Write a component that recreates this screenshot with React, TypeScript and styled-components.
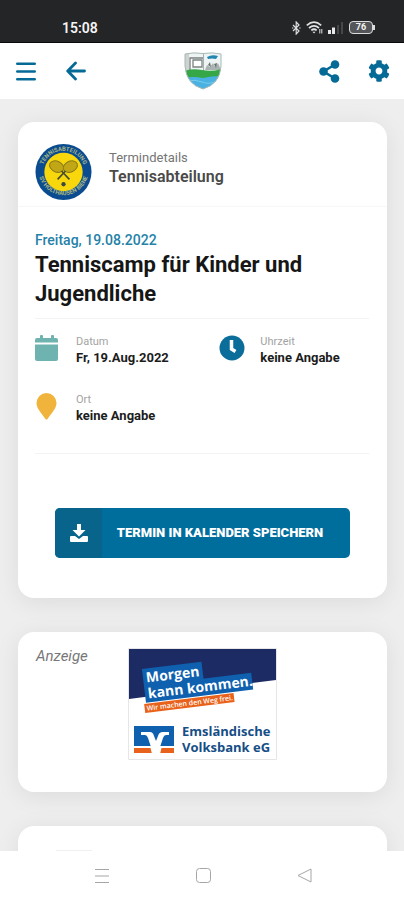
import React from "react";
import styled, { createGlobalStyle } from "styled-components";

const Global = createGlobalStyle`
  *, *::before, *::after { box-sizing: border-box; }
  body { margin: 0; background: #ececec; font-family: Roboto, "Liberation Sans", sans-serif; }
  h1, p, dl, dd, dt { margin: 0; }
  svg { display: block; flex: none; }
`;

const blue = "#066a96";

const Screen = styled.div`
  height: 100vh;
  display: flex;
  flex-direction: column;
  overflow: hidden;
`;

const StatusBar = styled.div`
  flex: none;
  display: flex;
  align-items: center;
  justify-content: space-between;
  height: 43px;
  padding: 13px 31px 0 62px;
  background: #242527;
  border-bottom: 1px solid #08090a;
  color: #f4f4f4;
`;

const Clock = styled.span`
  font-size: 14px;
  line-height: 16px;
  font-weight: 600;
`;

const StatusIcons = styled.div`
  display: flex;
  align-items: center;
  gap: 5px;
`;

const Header = styled.header`
  flex: none;
  display: grid;
  grid-template-columns: 1fr auto 1fr;
  align-items: center;
  height: 56px;
  padding: 0 11px 0 12px;
  background: #fff;
`;

const Actions = styled.div<{ $end?: boolean }>`
  display: flex;
  gap: 22px;
  justify-content: ${(p) => (p.$end ? "flex-end" : "flex-start")};
`;

const IconButton = styled.button`
  display: grid;
  place-items: center;
  width: 28px;
  height: 40px;
  padding: 0;
  border: 0;
  background: none;
  color: ${blue};
`;

const Content = styled.main`
  flex: 1;
  min-height: 0;
  overflow: hidden;
  display: flex;
  flex-direction: column;
  gap: 34px;
  padding: 23px 17px 0 18px;
  background: #eeeeee;
`;

const Card = styled.section`
  flex: none;
  border-radius: 16px;
  background: #fff;
  box-shadow: 0 4px 24px rgba(0, 0, 0, 0.08);
`;

const CardHead = styled.div`
  display: flex;
  align-items: center;
  gap: 17px;
  padding: 21px 17px 5px;
  border-bottom: 1px solid #f7f7f7;
`;

const HeadText = styled.div`
  padding-bottom: 8px;
  color: #4a4a4a;
`;

const Kicker = styled.p`
  font-size: 13px;
  line-height: 18px;
  color: #757575;
`;

const Department = styled.p`
  font-size: 16px;
  line-height: 20px;
  font-weight: 600;
`;

const CardBody = styled.div`
  padding: 25px 18px 40px 17px;
`;

const DateLine = styled.p`
  font-size: 14px;
  line-height: 16px;
  font-weight: 500;
  color: #2481a8;
`;

const Title = styled.h1`
  padding: 2px 0 10px;
  font-size: 22px;
  line-height: 29px;
  font-weight: 700;
  color: #161616;
`;

const Details = styled.dl`
  display: grid;
  grid-template-columns: 9fr 8fr;
  gap: 26px 16px;
  padding: 16px 0 28px;
  border-top: 1px solid #f3f3f3;
  border-bottom: 1px solid #f3f3f3;
`;

const Detail = styled.div`
  display: flex;
  gap: 15px;
`;

const Label = styled.dt`
  font-size: 11px;
  line-height: 14px;
  color: #a3a3a3;
`;

const Value = styled.dd`
  font-size: 13px;
  line-height: 18px;
  font-weight: 700;
  color: #1c1c1c;
  white-space: nowrap;
`;

const SaveButton = styled.button`
  display: flex;
  align-items: stretch;
  width: calc(100% - 39px);
  height: 50px;
  margin: 54px 19px 0 20px;
  padding: 0;
  border: 0;
  border-radius: 5px;
  overflow: hidden;
  background: #006e9d;
  color: #fff;
  font: 900 13px/20px Roboto, "Liberation Sans", sans-serif;
`;

const SaveIcon = styled.span`
  display: grid;
  place-items: center;
  width: 47px;
  background: #08648b;
`;

const SaveLabel = styled.span`
  flex: 1;
  align-self: center;
  padding-right: 12px;
  white-space: nowrap;
`;

const AdCard = styled(Card)`
  display: grid;
  grid-template-columns: 5fr auto 6fr;
  padding: 16px 0 32px 18px;
`;

const AdLabel = styled.span`
  font-size: 15px;
  line-height: 16px;
  font-style: italic;
  color: #777;
`;

const Peek = styled(Card)`
  height: 120px;
  padding: 24px 38px;
`;

const PeekBlock = styled.div`
  width: 36px;
  height: 20px;
  background: #f0f0f0;
`;

const NavBar = styled.nav`
  flex: none;
  display: flex;
  justify-content: center;
  gap: 73px;
  height: 49px;
  padding-left: 2px;
  background: #fff;
`;

const NavButton = styled(IconButton)`
  height: 49px;
  color: #a6a6a6;
`;

const Bluetooth = () => (
  <svg width="9" height="14" viewBox="0 0 9 14" fill="none" stroke="#ddd" strokeWidth="1.2">
    <path d="M1 4l6 6-2.800 3V1L7 4l-6 6" />
    <path d="M0 7h1.400M7.200 7h1.400" />
  </svg>
);

const Wifi = () => (
  <svg width="17" height="13" viewBox="0 0 17 13" fill="none" stroke="#e2e2e2" strokeWidth="1.7">
    <path d="M.8 4.400Q8 -2 15.200 4.400M3 7q5-4.400 10 0M5.300 9.400q2.700-2.300 5.400 0" />
    <path d="M6.400 10.700h3.200L8 12.500z" fill="#e2e2e2" stroke="none" />
    <path d="M13.800 8v4.500M15.800 8v4.500" strokeWidth="1" />
  </svg>
);

const Signal = () => (
  <svg width="16" height="13" viewBox="0 0 16 13">
    <path d="M0 9h3v4H0zM4 6.500h3V13H4z" fill="#e8e8e8" />
    <path d="M9 4h2v9H9zM13 1h2v12h-2z" fill="#464749" />
  </svg>
);

const BatteryBox = styled.span`
  position: relative;
  display: grid;
  place-items: center;
  width: 24px;
  height: 13px;
  border: 1px solid #ddd;
  border-radius: 4px;
  font-size: 9px;
  line-height: 11px;
  font-weight: 700;
  background: #55565a;

  &::after {
    content: "";
    position: absolute;
    right: -3px;
    top: 3px;
    width: 2px;
    height: 5px;
    background: #ddd;
  }
`;

const Crest = () => (
  <svg width="38" height="38" viewBox="0 0 38 38" role="img" aria-label="Wappen">
    <defs>
      <clipPath id="shield">
        <path d="M1 2Q10 0 19 1.500 28 0 37 2V14Q36 32 19 37 2 32 1 14z" />
      </clipPath>
    </defs>
    <g clipPath="url(#shield)">
      <path fill="#eef4f3" d="M0 0h38v38H0z" />
      <path fill="#cdd3d0" d="M1 1h4v19H1z" />
      <path fill="#fff" d="M7 6h11v10H7z" />
      <path fill="none" stroke="#7a8381" strokeWidth="1.300" d="M6 18V6h13M9 15V8h9v7z" />
      <path stroke="#a5afae" d="M19.500 1v18" />
      <path fill="#a9b3b2" d="M21 18l2-5 3 2 3-4 2 4 3-4 3 7z" />
      <path fill="#66716e" d="M24 13l2-3 1 5zM30 12l3-1-1 5z" />
      <path fill="#2285b2" d="M23 5q5-3 11-1l-2 3q-4-1-8 0z" />
      <path fill="#35a746" d="M0 19q9-3 18-1t20-1v10H0z" />
      <path fill="#49b2e3" d="M0 26q9-2 19 0 9-2 19-2v14H0z" />
      <path fill="none" stroke="#7accec" d="M4 29q7-2 14 1t15-1" />
    </g>
    <path d="M1 2Q10 0 19 1.500 28 0 37 2V14Q36 32 19 37 2 32 1 14z" fill="none" stroke="#a8b8b5" />
  </svg>
);

const ClubBadge = () => (
  <svg width="57" height="58" viewBox="0 0 58 58" role="img" aria-label="Tennisabteilung">
    <defs>
      <path id="arcTop" d="M7.300 29a21.700 21.700 0 0 1 43.400 0" />
      <path id="arcBottom" d="M3.500 27a25.500 25.500 0 0 0 51 0" />
    </defs>
    <circle cx="29" cy="29" r="28.500" fill="#0b4c91" />
    <circle cx="29" cy="29" r="19.500" fill="#f8d70d" />
    <g fill="#a9b885" fontFamily="Roboto, sans-serif" fontSize="6" fontWeight="700" textAnchor="middle">
      <text><textPath href="#arcTop" startOffset="50%">TENNISABTEILUNG</textPath></text>
      <text><textPath href="#arcBottom" startOffset="50%">SV HOLTHAUSEN BIENE</textPath></text>
    </g>
    <g fill="#c1a615" stroke="#8a7b1b" strokeWidth="1">
      <ellipse cx="22" cy="23.500" rx="7.500" ry="5.500" transform="rotate(25 22 23.500)" />
      <ellipse cx="36" cy="23.500" rx="7.500" ry="5.500" transform="rotate(-25 36 23.500)" />
    </g>
    <path d="M27 28l8 8.500M31 28l-8 8.500" stroke="#48502f" strokeWidth="1.800" />
    <circle cx="29" cy="41.500" r="2.200" fill="#3c4941" />
  </svg>
);

const BankAd = () => (
  <svg width="149" height="112" viewBox="0 0 149 112" role="img" aria-label="Emsländische Volksbank eG">
    <path fill="#fff" stroke="#e6e6e6" d="M.5.5h148v111H.5z" />
    <path fill="#1c2b63" d="M1 1h147v31L1 51z" />
    <g transform="rotate(-7 14 22)">
      <path fill="#0f60ae" d="M14 21h60v18H14z" />
      <path fill="#0f60ae" d="M14 38h108v17H14z" />
      <path fill="#e9621b" d="M12 56h90v9H12z" />
      <g fill="#fff" fontFamily="'Open Sans', sans-serif" fontWeight="700">
        <text x="17" y="35" fontSize="14">Morgen</text>
        <text x="17" y="51" fontSize="14">kann kommen.</text>
        <text x="14" y="63" fontSize="7" fontWeight="600">Wir machen den Weg frei.</text>
      </g>
    </g>
    <path fill="#0f60ae" d="M6 78h40v20H6z" />
    <path fill="#e9621b" d="M6 100h40v5H6z" />
    <path fill="#fff" d="M13 84h9q3 0 4 4l2 5 2-5q1-4 5-4h6v3h-3q-2 0-3 3l-5 15h-5l-5-15q-1-3-3-3h-4z" />
    <path fill="#fff" d="M22 98h12l-2 8h-8z" />
    <g fill="#164e86" fontFamily="'Open Sans', sans-serif" fontSize="13" fontWeight="700">
      <text x="54" y="88">Emsländische</text>
      <text x="54" y="104">Volksbank eG</text>
    </g>
  </svg>
);

const Menu = () => (
  <svg width="20" height="19" viewBox="0 0 20 19" stroke="currentColor" strokeWidth="2.600" strokeLinecap="round">
    <path d="M1.300 1.800h17.400M1.300 9.500h17.400M1.300 17.200h17.400" />
  </svg>
);

const Back = () => (
  <svg width="20" height="20" viewBox="0 0 20 20" fill="none" stroke="currentColor" strokeWidth="2.800" strokeLinecap="round" strokeLinejoin="round">
    <path d="M18.500 10H2M9.500 2L1.700 10l7.800 8" />
  </svg>
);

const Share = () => (
  <svg width="21" height="23" viewBox="0 0 21 23" fill="currentColor">
    <path d="M16 4.500L4.500 11.500 16 18.500" fill="none" stroke="currentColor" strokeWidth="2.600" />
    <circle cx="16" cy="4.500" r="4.300" />
    <circle cx="4.500" cy="11.500" r="4.300" />
    <circle cx="16" cy="18.500" r="4.300" />
  </svg>
);

const Gear = () => (
  <svg width="22" height="22" viewBox="0 0 512 512" fill="currentColor">
    <path d="M487.400 315.700l-42.600-24.600c4.300-23.200 4.300-47 0-70.200l42.600-24.600c4.900-2.800 7.100-8.600 5.500-14-11.100-35.600-30-67.800-54.700-94.600-3.800-4.100-10-5.100-14.800-2.300L380.800 110c-17.900-15.400-38.500-27.300-60.800-35.100V25.800c0-5.600-3.900-10.500-9.400-11.700-36.700-8.200-74.300-7.800-109.200 0-5.500 1.200-9.400 6.100-9.400 11.700V75c-22.200 7.900-42.800 19.800-60.800 35.100L88.700 85.500c-4.900-2.800-11-1.900-14.800 2.300-24.700 26.700-43.600 58.900-54.700 94.600-1.700 5.400.6 11.200 5.500 14L67.300 221c-4.300 23.200-4.300 47 0 70.200l-42.600 24.600c-4.900 2.800-7.100 8.600-5.500 14 11.100 35.600 30 67.800 54.700 94.600 3.800 4.100 10 5.100 14.800 2.300l42.600-24.600c17.900 15.400 38.500 27.300 60.800 35.100v49.200c0 5.600 3.900 10.500 9.400 11.700 36.700 8.200 74.300 7.800 109.200 0 5.500-1.200 9.400-6.100 9.400-11.700v-49.200c22.200-7.900 42.800-19.800 60.800-35.100l42.600 24.600c4.900 2.800 11 1.900 14.800-2.300 24.700-26.700 43.600-58.900 54.700-94.600 1.500-5.500-.7-11.300-5.600-14.100zM256 336c-44.100 0-80-35.900-80-80s35.900-80 80-80 80 35.900 80 80-35.900 80-80 80z" />
  </svg>
);

const Calendar = () => (
  <svg width="26" height="28" viewBox="0 0 26 28" fill="#6fb3b0">
    <path d="M2 3h3V1q0-1 1-1h1q1 0 1 1v2h8V1q0-1 1-1h1q1 0 1 1v2h2q2 0 2 2v2.500H0V5q0-2 2-2z" />
    <path d="M0 9.500h23V24q0 2-2 2H2q-2 0-2-2z" />
  </svg>
);

const Time = () => (
  <svg width="26" height="28" viewBox="0 0 26 28">
    <circle cx="13" cy="13" r="12.500" fill="#0b6d9a" />
    <path d="M12.500 5v9l4 2.500" fill="none" stroke="#fff" strokeWidth="3.500" />
  </svg>
);

const Pin = () => (
  <svg width="26" height="28" viewBox="0 0 26 28" fill="#f0b43d">
    <path d="M11.500 0a10 10 0 0 1 10 10c0 5-4 9-9 16q-1 1-2 0C5.500 19 1.500 15 1.500 10A10 10 0 0 1 11.500 0z" />
  </svg>
);

const Download = () => (
  <svg width="18" height="18" viewBox="0 0 18 18" fill="currentColor">
    <path d="M7 0h4v6h4.500L9 12.500 2.500 6H7z" />
    <path d="M1 12h4l4 3 4-3h4q1 0 1 1v4q0 1-1 1H1q-1 0-1-1v-4q0-1 1-1z" />
  </svg>
);

const details = [
  { label: "Datum", value: "Fr, 19.Aug.2022", icon: <Calendar /> },
  { label: "Uhrzeit", value: "keine Angabe", icon: <Time /> },
  { label: "Ort", value: "keine Angabe", icon: <Pin /> },
];

export default function App() {
  return (
    <>
      <Global />
      <Screen>
        <StatusBar>
          <Clock>15:08</Clock>
          <StatusIcons>
            <Bluetooth />
            <Wifi />
            <Signal />
            <BatteryBox>76</BatteryBox>
          </StatusIcons>
        </StatusBar>
        <Header>
          <Actions>
            <IconButton aria-label="Menü"><Menu /></IconButton>
            <IconButton aria-label="Zurück"><Back /></IconButton>
          </Actions>
          <Crest />
          <Actions $end>
            <IconButton aria-label="Teilen"><Share /></IconButton>
            <IconButton aria-label="Einstellungen"><Gear /></IconButton>
          </Actions>
        </Header>
        <Content>
          <Card>
            <CardHead>
              <ClubBadge />
              <HeadText>
                <Kicker>Termindetails</Kicker>
                <Department>Tennisabteilung</Department>
              </HeadText>
            </CardHead>
            <CardBody>
              <DateLine>Freitag, 19.08.2022</DateLine>
              <Title>Tenniscamp für Kinder und Jugendliche</Title>
              <Details>
                {details.map((d) => (
                  <Detail key={d.label}>
                    {d.icon}
                    <div>
                      <Label>{d.label}</Label>
                      <Value>{d.value}</Value>
                    </div>
                  </Detail>
                ))}
              </Details>
              <SaveButton>
                <SaveIcon><Download /></SaveIcon>
                <SaveLabel>TERMIN IN KALENDER SPEICHERN</SaveLabel>
              </SaveButton>
            </CardBody>
          </Card>
          <AdCard>
            <AdLabel>Anzeige</AdLabel>
            <BankAd />
          </AdCard>
          <Peek>
            <PeekBlock />
          </Peek>
        </Content>
        <NavBar>
          <NavButton aria-label="Letzte Apps">
            <svg width="14" height="14" viewBox="0 0 14 14" stroke="currentColor" fill="none">
              <path d="M0 .5h14M0 7h14M0 13.500h14" />
            </svg>
          </NavButton>
          <NavButton aria-label="Startbildschirm">
            <svg width="15" height="15" viewBox="0 0 15 15" stroke="currentColor" fill="none">
              <rect x=".5" y=".5" width="14" height="14" rx="3" />
            </svg>
          </NavButton>
          <NavButton aria-label="Zurück">
            <svg width="15" height="15" viewBox="0 0 15 15" stroke="currentColor" fill="none" strokeLinejoin="round">
              <path d="M14 1v13L1 7.500z" />
            </svg>
          </NavButton>
        </NavBar>
      </Screen>
    </>
  );
}
